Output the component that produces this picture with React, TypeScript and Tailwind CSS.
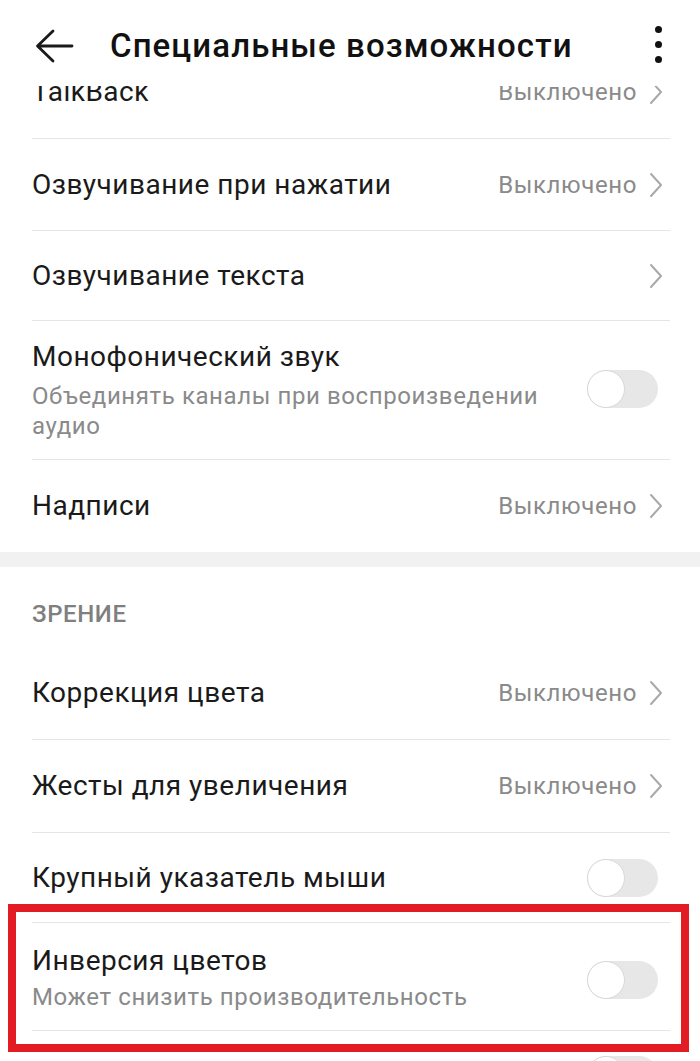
import React from "react";

function Chevron() {
  return (
    <svg width="14" height="26" viewBox="0 0 14 26" fill="none">
      <path d="M2 2 L12 13 L2 24" stroke="#a9a9a9" strokeWidth="2" strokeLinecap="round" strokeLinejoin="round" />
    </svg>
  );
}

function Toggle() {
  return (
    <div className="flex items-center w-[71px] h-[38px] rounded-full bg-[#e7e7e7]">
      <div className="w-[38px] h-[38px] rounded-full bg-white border border-[#d8d8d8]" />
    </div>
  );
}

function Value() {
  return (
    <div className="flex items-center gap-[12px] pr-[7px] shrink-0">
      <span className="text-[24px] tracking-[0.6px] text-[#8a8a8a] leading-none">Выключено</span>
      <Chevron />
    </div>
  );
}

const titleCls = "text-[28px] tracking-[0.5px] text-[#1a1a1a] leading-[34px]";
const subCls = "text-[24px] tracking-[0.6px] text-[#8a8a8a] leading-[30px]";

function NavRow({ title, value = true, h, border = true }: { title: string; value?: boolean; h: string; border?: boolean }) {
  return (
    <div className={`flex items-center justify-between ml-[32px] mr-[30px] ${h} ${border ? "border-b border-[#e5e5e5]" : ""}`}>
      <span className={titleCls}>{title}</span>
      {value ? (
        <Value />
      ) : (
        <div className="pr-[7px]">
          <Chevron />
        </div>
      )}
    </div>
  );
}

export default function App() {
  return (
    <div className="relative w-[700px] h-[1061px] overflow-hidden bg-white font-['Roboto',sans-serif]">
      {/* Header */}
      <div className="flex items-center h-[86px] pt-[6px]">
        <div className="w-[110px] flex items-center pl-[34px]">
          <svg width="40" height="36" viewBox="0 0 40 36" fill="none">
            <path d="M38 18 H4 M19 3 L3.5 18 L19 33" stroke="#1a1a1a" strokeWidth="2.8" strokeLinecap="round" strokeLinejoin="round" />
          </svg>
        </div>
        <div className="flex-1 text-[33px] tracking-[1.1px] font-medium text-[#111] leading-[40px]">Специальные возможности</div>
        <div className="flex flex-col items-center gap-[8px] w-[20px] mr-[32px] -mt-[4px]">
          <div className="w-[7px] h-[7px] rounded-full bg-[#111]" />
          <div className="w-[7px] h-[7px] rounded-full bg-[#111]" />
          <div className="w-[7px] h-[7px] rounded-full bg-[#111]" />
        </div>
      </div>

      {/* Partially scrolled TalkBack row */}
      <div className="h-[53px] overflow-hidden ml-[32px] mr-[30px] border-b border-[#e5e5e5]">
        <div className="-mt-[40px] h-[92px] flex items-center justify-between">
          <span className={titleCls}>TalkBack</span>
          <Value />
        </div>
      </div>

      <NavRow title="Озвучивание при нажатии" h="h-[92px]" />
      <NavRow title="Озвучивание текста" value={false} h="h-[90px]" />

      {/* Mono */}
      <div className="flex items-center justify-between ml-[32px] mr-[30px] h-[139px] border-b border-[#e5e5e5]">
        <div className="flex flex-col">
          <span className={titleCls}>Монофонический звук</span>
          <span className={`mt-[7px] ${subCls}`}>
            Объединять каналы при воспроизведении
            <br />
            аудио
          </span>
        </div>
        <div className="pr-[12px] pb-[2px]">
          <Toggle />
        </div>
      </div>

      <NavRow title="Надписи" h="h-[92px]" border={false} />

      <div className="h-[15px] bg-[#f1f1f1]" />

      <div className="h-[80px] pl-[32px] pt-[33px]">
        <span className="block text-[24px] tracking-[0.6px] font-medium text-[#7f7f7f] leading-[28px]">ЗРЕНИЕ</span>
      </div>

      <NavRow title="Коррекция цвета" h="h-[93px]" />
      <NavRow title="Жесты для увеличения" h="h-[93px]" />

      <div className="flex items-center justify-between ml-[32px] mr-[30px] h-[90px] border-b border-[#e5e5e5]">
        <span className={titleCls}>Крупный указатель мыши</span>
        <div className="pr-[12px]">
          <Toggle />
        </div>
      </div>

      <div className="flex items-center justify-between ml-[32px] mr-[30px] h-[108px] border-b border-[#e5e5e5]">
        <div className="flex flex-col pt-[3px]">
          <span className={titleCls}>Инверсия цветов</span>
          <span className={`mt-[4px] ${subCls}`}>Может снизить производительность</span>
        </div>
        <div className="pr-[12px] pt-[6px]">
          <Toggle />
        </div>
      </div>

      <div className="flex items-start justify-end ml-[32px] mr-[30px] h-[100px] pt-[25px]">
        <div className="pr-[12px]">
          <Toggle />
        </div>
      </div>

      {/* Red annotation box */}
      <div className="absolute left-[8px] top-[904px] w-[681px] h-[148px] border-[8px] border-[#e31b23]" />
    </div>
  );
}
